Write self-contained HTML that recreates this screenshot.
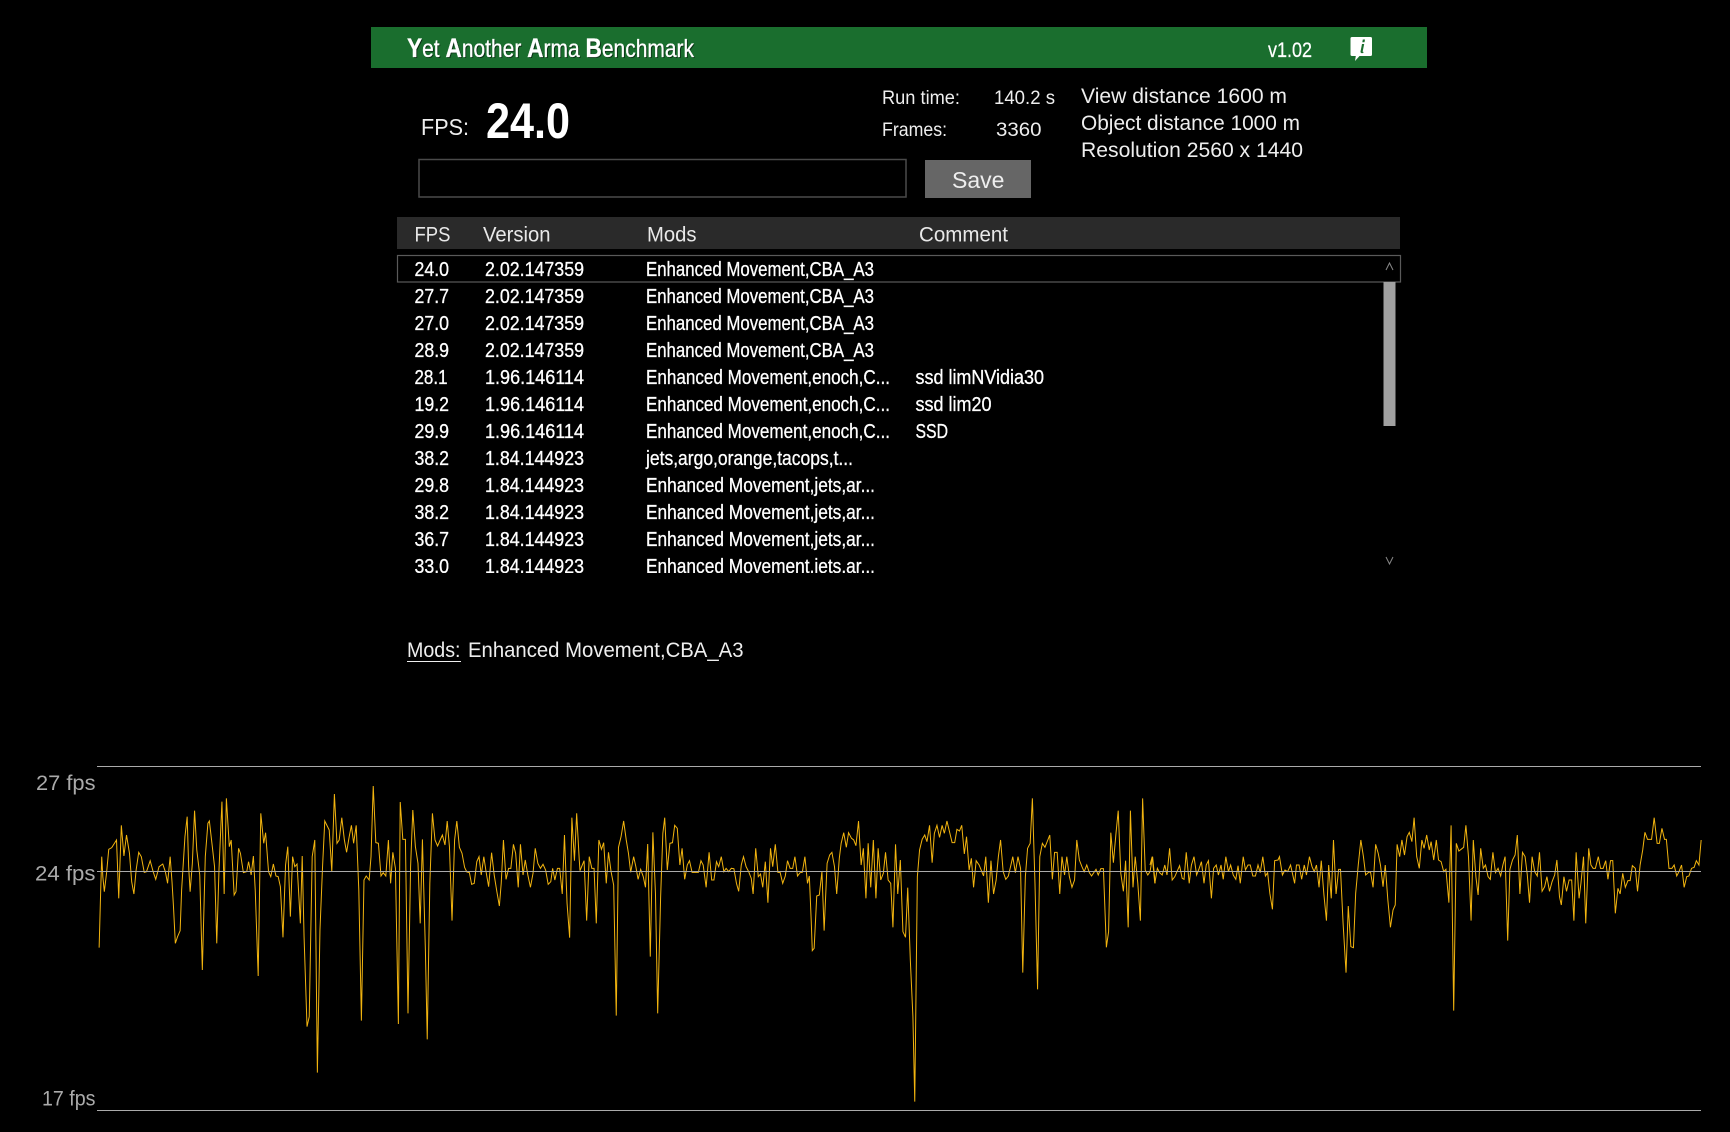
<!DOCTYPE html>
<html><head><meta charset="utf-8"><title>Yet Another Arma Benchmark</title>
<style>
html,body{margin:0;padding:0;background:#000;width:1730px;height:1132px;overflow:hidden}
svg{display:block}
text{font-family:"Liberation Sans",Arial,sans-serif;fill:#fff;white-space:pre}
.h{fill:#e8e8e8;font-size:21px}
.r text{font-size:20px;stroke:#fff;stroke-width:.3}
.l{fill:#aaa;font-size:21px}
.d{fill:#eee;font-size:21px}
</style></head><body>
<svg width="1730" height="1132" viewBox="0 0 1730 1132" xmlns="http://www.w3.org/2000/svg">
<defs><clipPath id="c"><rect x="397" y="250" width="1004" height="323"/></clipPath></defs>
<rect x="371" y="27" width="1056" height="41" fill="#1a6e2e"/>
<text x="408" y="58" textLength="287" lengthAdjust="spacingAndGlyphs" font-size="25" style="fill:#0b3015"><tspan font-weight="bold" font-size="27">Y</tspan>et <tspan font-weight="bold" font-size="27">A</tspan>nother <tspan font-weight="bold" font-size="27">A</tspan>rma <tspan font-weight="bold" font-size="27">B</tspan>enchmark</text>
<text x="407" y="57" textLength="287" lengthAdjust="spacingAndGlyphs" font-size="25" stroke="#fff" stroke-width=".3"><tspan font-weight="bold" font-size="27">Y</tspan>et <tspan font-weight="bold" font-size="27">A</tspan>nother <tspan font-weight="bold" font-size="27">A</tspan>rma <tspan font-weight="bold" font-size="27">B</tspan>enchmark</text>
<text x="1268" y="57" textLength="44" lengthAdjust="spacingAndGlyphs" font-size="21" stroke="#fff" stroke-width=".25">v1.02</text>
<path d="M1352 37h18.500a1.500 1.500 0 0 1 1.500 1.500v16a1.500 1.500 0 0 1-1.500 1.500h-11l-4.500 5 .8-5h-3.800a1.500 1.500 0 0 1-1.500-1.500v-16a1.500 1.500 0 0 1 1.500-1.500z" fill="#fff"/>
<path d="M1362.800 39.500h2.200l-.5 2.800h-2.200zM1362 44h2.200l-1.500 7.400q-.1.700 .8.400l-.2 1.200q-2.800.7-2.800-1.400z" fill="#1a6e2e"/>

<text x="421" y="135" class="d" style="font-size:23px" textLength="48" lengthAdjust="spacingAndGlyphs">FPS:</text>
<text x="486" y="138" font-size="50" font-weight="bold" textLength="84" lengthAdjust="spacingAndGlyphs">24.0</text>
<text x="882" y="104" class="d" style="font-size:19px" textLength="78" lengthAdjust="spacingAndGlyphs">Run time:</text>
<text x="882" y="136" class="d" style="font-size:19px" textLength="65" lengthAdjust="spacingAndGlyphs">Frames:</text>
<text x="994" y="104" class="d" style="font-size:19px" textLength="61" lengthAdjust="spacingAndGlyphs">140.2 s</text>
<text x="996" y="136" class="d" style="font-size:19px" textLength="45.500" lengthAdjust="spacingAndGlyphs">3360</text>
<text x="1081" y="103" class="d" style="font-size:21px" textLength="206" lengthAdjust="spacingAndGlyphs">View distance 1600 m</text>
<text x="1081" y="130" class="d" style="font-size:21px" textLength="219" lengthAdjust="spacingAndGlyphs">Object distance 1000 m</text>
<text x="1081" y="157" class="d" style="font-size:21px" textLength="222" lengthAdjust="spacingAndGlyphs">Resolution 2560 x 1440</text>

<rect x="419" y="159.500" width="487" height="37.500" fill="#000" stroke="#4a4a4a" stroke-width="1.500"/>
<rect x="925" y="160" width="106" height="38" fill="#666"/>
<text x="952" y="188" style="font-size:23px;fill:#eee" textLength="52.500" lengthAdjust="spacingAndGlyphs">Save</text>

<rect x="397" y="217" width="1003" height="32" fill="#2a2a2a"/>
<text x="414.500" y="241.500" class="h" textLength="36" lengthAdjust="spacingAndGlyphs">FPS</text>
<text x="483" y="241.500" class="h" textLength="67.500" lengthAdjust="spacingAndGlyphs">Version</text>
<text x="647" y="241.500" class="h" textLength="49.500" lengthAdjust="spacingAndGlyphs">Mods</text>
<text x="919" y="241.500" class="h" textLength="89" lengthAdjust="spacingAndGlyphs">Comment</text>

<rect x="397.500" y="255.500" width="1003" height="26.500" fill="#000" stroke="#5a5a5a" stroke-width="1.200"/>
<g class="r" clip-path="url(#c)">
<text x="414.500" y="276" textLength="34.500" lengthAdjust="spacingAndGlyphs">24.0</text><text x="485" y="276" textLength="99" lengthAdjust="spacingAndGlyphs">2.02.147359</text><text x="646" y="276" textLength="228" lengthAdjust="spacingAndGlyphs">Enhanced Movement,CBA_A3</text>
<text x="414.500" y="303" textLength="34.500" lengthAdjust="spacingAndGlyphs">27.7</text><text x="485" y="303" textLength="99" lengthAdjust="spacingAndGlyphs">2.02.147359</text><text x="646" y="303" textLength="228" lengthAdjust="spacingAndGlyphs">Enhanced Movement,CBA_A3</text>
<text x="414.500" y="330" textLength="34.500" lengthAdjust="spacingAndGlyphs">27.0</text><text x="485" y="330" textLength="99" lengthAdjust="spacingAndGlyphs">2.02.147359</text><text x="646" y="330" textLength="228" lengthAdjust="spacingAndGlyphs">Enhanced Movement,CBA_A3</text>
<text x="414.500" y="357" textLength="34.500" lengthAdjust="spacingAndGlyphs">28.9</text><text x="485" y="357" textLength="99" lengthAdjust="spacingAndGlyphs">2.02.147359</text><text x="646" y="357" textLength="228" lengthAdjust="spacingAndGlyphs">Enhanced Movement,CBA_A3</text>
<text x="414.500" y="384" textLength="33" lengthAdjust="spacingAndGlyphs">28.1</text><text x="485" y="384" textLength="99" lengthAdjust="spacingAndGlyphs">1.96.146114</text><text x="646" y="384" textLength="244" lengthAdjust="spacingAndGlyphs">Enhanced Movement,enoch,C...</text><text x="915.500" y="384" textLength="128.500" lengthAdjust="spacingAndGlyphs">ssd limNVidia30</text>
<text x="414.500" y="411" textLength="34.500" lengthAdjust="spacingAndGlyphs">19.2</text><text x="485" y="411" textLength="99" lengthAdjust="spacingAndGlyphs">1.96.146114</text><text x="646" y="411" textLength="244" lengthAdjust="spacingAndGlyphs">Enhanced Movement,enoch,C...</text><text x="915.500" y="411" textLength="76" lengthAdjust="spacingAndGlyphs">ssd lim20</text>
<text x="414.500" y="438" textLength="34.500" lengthAdjust="spacingAndGlyphs">29.9</text><text x="485" y="438" textLength="99" lengthAdjust="spacingAndGlyphs">1.96.146114</text><text x="646" y="438" textLength="244" lengthAdjust="spacingAndGlyphs">Enhanced Movement,enoch,C...</text><text x="915.500" y="438" textLength="32.500" lengthAdjust="spacingAndGlyphs">SSD</text>
<text x="414.500" y="465" textLength="34.500" lengthAdjust="spacingAndGlyphs">38.2</text><text x="485" y="465" textLength="99" lengthAdjust="spacingAndGlyphs">1.84.144923</text><text x="646" y="465" textLength="207" lengthAdjust="spacingAndGlyphs">jets,argo,orange,tacops,t...</text>
<text x="414.500" y="492" textLength="34.500" lengthAdjust="spacingAndGlyphs">29.8</text><text x="485" y="492" textLength="99" lengthAdjust="spacingAndGlyphs">1.84.144923</text><text x="646" y="492" textLength="229" lengthAdjust="spacingAndGlyphs">Enhanced Movement,jets,ar...</text>
<text x="414.500" y="519" textLength="34.500" lengthAdjust="spacingAndGlyphs">38.2</text><text x="485" y="519" textLength="99" lengthAdjust="spacingAndGlyphs">1.84.144923</text><text x="646" y="519" textLength="229" lengthAdjust="spacingAndGlyphs">Enhanced Movement,jets,ar...</text>
<text x="414.500" y="546" textLength="34.500" lengthAdjust="spacingAndGlyphs">36.7</text><text x="485" y="546" textLength="99" lengthAdjust="spacingAndGlyphs">1.84.144923</text><text x="646" y="546" textLength="229" lengthAdjust="spacingAndGlyphs">Enhanced Movement,jets,ar...</text>
<text x="414.500" y="573" textLength="34.500" lengthAdjust="spacingAndGlyphs">33.0</text><text x="485" y="573" textLength="99" lengthAdjust="spacingAndGlyphs">1.84.144923</text><text x="646" y="573" textLength="229" lengthAdjust="spacingAndGlyphs">Enhanced Movement,jets,ar...</text>
</g>
<rect x="1383.500" y="282" width="12" height="144" fill="#a0a0a0"/>
<path d="M1386 270l3.500-7 3.500 7" fill="none" stroke="#888" stroke-width="1"/>
<path d="M1386 557l3.500 7 3.500-7" fill="none" stroke="#888" stroke-width="1"/>

<text x="407" y="657" class="d" textLength="53.500" lengthAdjust="spacingAndGlyphs">Mods:</text>
<rect x="407" y="661" width="54" height="1" fill="#eee"/>
<text x="468" y="657" class="d" textLength="275.500" lengthAdjust="spacingAndGlyphs">Enhanced Movement,CBA_A3</text>

<text x="36" y="790" class="l" textLength="59.500" lengthAdjust="spacingAndGlyphs">27 fps</text>
<text x="35" y="880.500" class="l" textLength="60.500" lengthAdjust="spacingAndGlyphs">24 fps</text>
<text x="42" y="1105.500" class="l" textLength="53.500" lengthAdjust="spacingAndGlyphs">17 fps</text>

<g fill="none" stroke="#f2b40f" stroke-width="1" stroke-linejoin="miter">
<polyline vector-effect="non-scaling-stroke" transform="translate(0,750) scale(.3699,.33333)" points="268,593 272,430 275,320 278,380 282,425 288,370 294,298 302,293 315,270 321,445 328,226 335,318 342,255 350,310 356,395 362,432 368,360 375,307 382,320 390,367 396,365 406,332 414,365 421,388 430,350 440,342 447,365 453,400 460,320 465,395 469,470 474,580 480,560 487,542 491,420 500,260 506,200 510,350 514,425 520,340 526,182 532,300 540,375 547,660 555,320 562,220 566,213 574,290 580,350 586,580 592,360 600,155 606,432 612,145 620,290 625,270 633,435 638,425 645,295 650,310 658,368 667,365 672,335 679,375 685,318 690,420 698,678 705,190 713,280 718,248 726,365 732,380 739,342 746,378 752,380 758,410 765,562 772,345 778,290 785,500 791,320 797,350 803,342 806,400 812,520 817,318 822,560 830,830 836,800 844,320 851,270 858,968 865,540 872,350 878,213 890,240 897,365 904,132 911,280 917,270 924,203 931,270 937,307 944,260 950,226 956,280 963,226 970,420 977,812 984,390 990,378 998,390 1003,320 1009,108 1016,278 1023,280 1030,378 1036,368 1043,378 1050,270 1056,400 1062,307 1069,355 1077,822 1082,156 1089,268 1096,268 1103,790 1110,350 1116,180 1123,290 1130,340 1136,520 1142,268 1150,600 1155,868 1162,400 1169,190 1176,270 1183,288 1190,270 1196,255 1203,285 1209,213 1215,290 1222,512 1229,270 1235,213 1242,292 1249,310 1256,352 1262,366 1269,368 1275,403 1282,400 1289,335 1295,320 1301,375 1308,320 1314,365 1321,410 1329,308 1336,375 1344,430 1350,468 1355,400 1361,270 1368,388 1375,355 1381,355 1388,283 1394,310 1401,412 1407,283 1414,375 1420,330 1427,375 1434,412 1441,370 1447,295 1454,340 1461,355 1468,343 1475,360 1482,403 1489,395 1494,355 1500,390 1507,355 1513,355 1520,432 1526,255 1533,460 1540,563 1546,203 1553,332 1559,190 1566,330 1568,362"/>
<polyline vector-effect="non-scaling-stroke" transform="translate(580,750) scale(.3699,.33333)" points="0,362 11,332 18,512 25,320 32,355 38,355 44,520 51,270 58,298 64,278 71,400 77,307 84,365 91,405 98,797 104,292 111,260 118,213 125,270 131,310 137,367 145,320 151,350 157,388 164,358 171,380 177,412 183,282 190,620 197,247 204,430 210,790 218,440 224,250 229,203 236,360 243,280 250,278 256,226 263,235 270,345 276,295 283,388 290,345 296,332 303,367 320,367 327,332 333,345 341,412 349,307 356,390 362,390 369,335 375,350 382,320 389,365 395,355 402,365 409,355 416,356 423,400 429,424 436,345 442,320 449,350 456,365 463,385 468,432 475,295 482,380 488,372 494,412 501,335 508,458 515,295 521,350 528,283 535,367 541,367 548,400 555,378 561,332 568,355 575,355 581,320 588,378 595,368 601,367 608,320 615,400 620,378 625,510 628,602 633,595 640,438 647,435 654,365 660,542 668,340 675,315 681,307 688,350 694,432 701,325 706,280 713,248 720,292 726,248 734,265 740,270 746,287 753,213 760,345 766,295 773,445 779,280 786,412 793,270 800,445 806,295 813,390 820,370 826,307 833,390 840,400 846,532 853,283 859,432 866,330 873,545 880,562 886,413 893,630 900,800 905,1055 912,380 918,300 925,268 932,255 938,275 945,226 952,338 958,250 965,226 972,262 979,226 985,250 992,213 1000,250 1006,278 1013,278 1019,238 1026,243 1032,226 1039,312 1045,260 1052,360 1058,325 1064,412 1071,332 1079,345 1091,378 1097,320 1104,458 1111,332 1118,432 1125,390 1131,320 1137,270 1144,365 1151,388 1158,378 1165,345 1170,320 1177,368 1184,320 1191,355 1197,668 1204,380 1210,295 1217,280 1223,145 1230,400 1237,718 1243,320 1250,280 1257,292 1270,255 1277,388 1283,307 1290,307 1297,432 1303,320 1310,375 1316,320 1323,380 1330,412 1337,390 1343,270 1350,330 1357,350 1363,365 1370,345 1377,368 1383,378 1395,358 1401,375 1408,356 1415,356 1423,592 1429,545 1435,248 1442,338 1449,250 1455,182 1462,370 1469,424 1475,332 1482,532 1488,182 1495,412 1501,320 1508,400 1515,512 1521,145 1528,360 1535,375 1541,365 1548,320 1555,400"/>
<polyline vector-effect="non-scaling-stroke" transform="translate(1150,750) scale(.3699,.33333)" points="0,345 6,320 13,400 20,355 26,368 33,375 40,345 46,375 53,295 60,390 67,380 80,347 87,385 92,388 98,307 106,400 112,345 119,320 126,375 133,355 139,335 146,400 152,345 158,332 166,445 172,355 179,345 185,375 192,345 198,388 205,320 212,365 218,345 225,375 232,388 238,347 244,400 252,320 258,360 265,345 271,345 278,378 285,378 292,345 298,368 305,320 312,378 318,368 324,430 331,478 337,332 346,330 350,320 358,375 365,360 372,365 380,345 391,400 396,345 403,345 410,388 417,345 423,375 431,320 438,350 444,365 450,345 457,412 463,332 470,432 477,512 483,345 490,445 496,270 503,432 510,358 515,358 522,520 530,668 536,468 543,590 550,593 556,430 563,345 570,270 577,320 583,375 590,368 596,365 603,412 610,283 617,310 623,345 630,410 636,345 643,450 650,532 657,480 663,465 668,283 675,320 681,270 688,315 695,260 701,247 708,275 714,203 721,320 728,355 735,270 741,295 748,255 755,300 760,275 767,330 774,270 780,330 787,335 794,365 800,358 808,458 814,226 821,782 828,280 835,303 848,292 854,226 861,320 868,512 874,270 881,380 887,435 894,295 901,355 907,345 914,380 920,388 927,307 934,368 941,355 948,378 954,345 960,320 967,572 973,358 980,330 987,315 993,255 1000,432 1007,307 1014,320 1020,375 1026,458 1033,320 1040,365 1047,378 1053,307 1060,424 1067,410 1073,380 1080,424 1087,395 1094,375 1100,330 1107,440 1112,465 1119,380 1126,424 1133,390 1140,390 1146,512 1152,307 1160,445 1165,400 1172,320 1178,520 1186,295 1192,345 1198,355 1204,355 1212,320 1218,355 1225,355 1232,332 1238,388 1245,332 1251,332 1258,490 1265,415 1271,432 1278,370 1285,412 1292,392 1298,392 1304,347 1312,355 1318,424 1325,345 1332,300 1338,247 1345,268 1356,268 1363,203 1371,280 1377,280 1384,235 1391,268 1396,268 1403,355 1411,355 1417,345 1424,378 1430,365 1437,345 1444,412 1451,380 1457,378 1464,355 1471,352 1477,332 1484,345 1490,270"/>
</g>
<rect x="97" y="766" width="1604" height="1" fill="#aaa"/>
<rect x="97" y="871" width="1604" height="1" fill="#aaa"/>
<rect x="97" y="1110" width="1604" height="1" fill="#aaa"/>
</svg>
</body></html>
